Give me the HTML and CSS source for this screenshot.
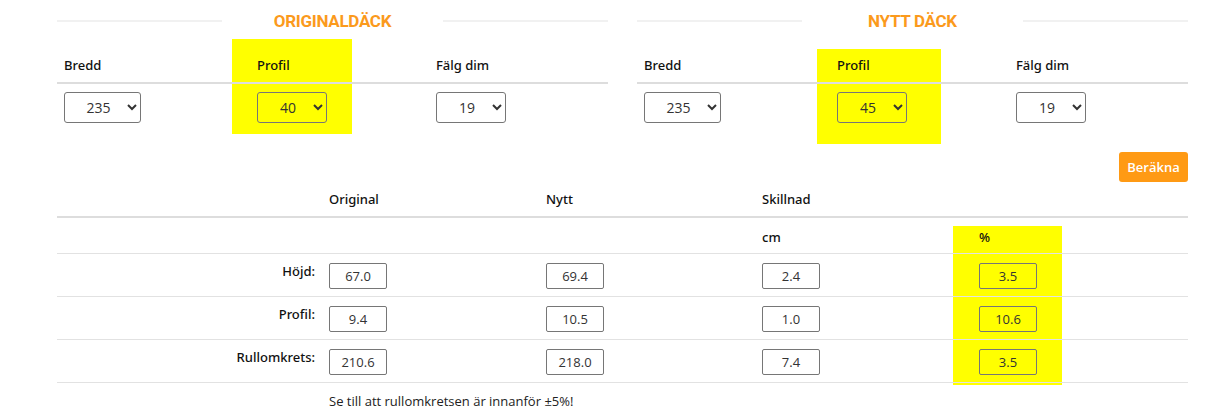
FILE: index.html
```html
<!DOCTYPE html>
<html lang="sv">
<head>
  <meta charset="UTF-8" />
  <meta name="viewport" content="width=device-width, initial-scale=1.0"/>
  <title>Däckkalkylator</title>
  <link rel="stylesheet" href="styles.css">
</head>
<body>

  <div class="page">
    <div class="tyres">
      <section class="tyre">
        <h2 class="tyre-title">ORIGINALDÄCK</h2>
        <div class="tyre-grid">
          <div class="th">Bredd</div>
          <div class="th mark">Profil</div>
          <div class="th">Fälg dim</div>
          <div class="td">
            <select class="wide"><option>205</option><option>215</option><option>225</option><option selected>235</option><option>245</option></select>
          </div>
          <div class="td">
            <select><option>35</option><option selected>40</option><option>45</option><option>50</option></select>
          </div>
          <div class="td">
            <select><option>17</option><option>18</option><option selected>19</option><option>20</option></select>
          </div>
        </div>
      </section>

      <section class="tyre">
        <h2 class="tyre-title">NYTT DÄCK</h2>
        <div class="tyre-grid">
          <div class="th">Bredd</div>
          <div class="th mark mark-new">Profil</div>
          <div class="th">Fälg dim</div>
          <div class="td">
            <select class="wide"><option>205</option><option>215</option><option>225</option><option selected>235</option><option>245</option></select>
          </div>
          <div class="td">
            <select><option>35</option><option>40</option><option selected>45</option><option>50</option></select>
          </div>
          <div class="td">
            <select><option>17</option><option>18</option><option selected>19</option><option>20</option></select>
          </div>
        </div>
      </section>
    </div>

    <div class="actions">
      <button id="calcBtn">Beräkna</button>
    </div>

    <div class="result">
      <div class="row head">
        <div></div>
        <div class="cell">Original</div>
        <div class="cell">Nytt</div>
        <div class="cell">Skillnad</div>
        <div></div>
      </div>
      <div class="row sub">
        <div></div>
        <div></div>
        <div></div>
        <div class="cell">cm</div>
        <div class="cell mark-pct">%</div>
      </div>
      <div class="row">
        <div class="label">Höjd:</div>
        <div class="cell"><input type="text" value="67.0" readonly></div>
        <div class="cell"><input type="text" value="69.4" readonly></div>
        <div class="cell"><input type="text" value="2.4" readonly></div>
        <div class="cell"><input type="text" value="3.5" readonly></div>
      </div>
      <div class="row">
        <div class="label">Profil:</div>
        <div class="cell"><input type="text" value="9.4" readonly></div>
        <div class="cell"><input type="text" value="10.5" readonly></div>
        <div class="cell"><input type="text" value="1.0" readonly></div>
        <div class="cell"><input type="text" value="10.6" readonly></div>
      </div>
      <div class="row">
        <div class="label">Rullomkrets:</div>
        <div class="cell"><input type="text" value="210.6" readonly></div>
        <div class="cell"><input type="text" value="218.0" readonly></div>
        <div class="cell"><input type="text" value="7.4" readonly></div>
        <div class="cell"><input type="text" value="3.5" readonly></div>
      </div>
      <p class="note">Se till att rullomkretsen är innanför ±5%!</p>
    </div>
  </div>

</body>
</html>
```

FILE: styles.css
```css
body {
  margin: 0;
  background: #fff;
  font-family: 'Open Sans', sans-serif;
  font-size: 13px;
  color: #222;
}

.page {
  width: 1131px;
  margin-left: 57px;
}

/* däck-väljare */
.tyres {
  display: flex;
  gap: 29px;
}

.tyre {
  flex: 1;
}

.tyre-title {
  display: grid;
  grid-template-columns: 30% 1fr 30%;
  align-items: center;
  height: 42px;
  margin: 0;
  font-family: Roboto, sans-serif;
  font-size: 17px;
  font-weight: bold;
  letter-spacing: -0.3px;
  text-align: center;
  color: #fb9a1c;
}

.tyre-title::before,
.tyre-title::after {
  content: '';
  height: 2px;
  background: #f1f1f1;
}

.tyre-grid {
  display: grid;
  grid-template-columns: 193px 179px 1fr;
}

.th {
  padding: 14px 7px 8px;
  line-height: 18px;
  font-family: 'Noto Sans', sans-serif;
  font-weight: 500;
  color: #111;
  border-bottom: 2px solid #ddd;
}

.td {
  padding: 8px 7px 9px;
}

select {
  width: 70px;
  height: 31px;
  padding: 0 4px 0 8px;
  border: 1px solid #767676;
  border-radius: 3px;
  background: transparent;
  font-family: 'Open Sans', sans-serif;
  font-size: 14px;
  color: #333;
  text-align-last: center;
}

select.wide {
  width: 77px;
}

/* gul markering */
.mark,
.mark-pct {
  position: relative;
}

.mark::before,
.mark-pct::before {
  content: '';
  position: absolute;
  z-index: -1;
  background: #ffff00;
}

.mark::before {
  left: -18px;
  top: -3px;
  width: 120px;
  height: 95px;
}

.mark-new::before {
  left: -13px;
  top: 7px;
  width: 124px;
}

.mark-pct::before {
  left: -18px;
  top: 8px;
  width: 109px;
  height: 159px;
}

.actions {
  display: flex;
  justify-content: flex-end;
  padding-top: 20px;
}

#calcBtn {
  width: 69px;
  height: 30px;
  padding: 0;
  border: none;
  border-radius: 3px;
  background: #ff9a14;
  color: #fff;
  font-family: 'Open Sans', sans-serif;
  font-size: 13px;
  font-weight: 600;
  cursor: pointer;
}

/* resultat */
.row {
  display: grid;
  grid-template-columns: 264px 217px 216px 217px 1fr;
  height: 42px;
  border-bottom: 1px solid #e2e2e2;
}

.row.head {
  height: 34px;
  border-bottom: 2px solid #ddd;
}

.row.head .cell {
  padding-top: 8px;
}

.row.sub {
  height: 35px;
}

.row.sub .cell {
  padding-top: 10px;
}

.cell {
  padding: 9px 8px 0;
  line-height: 18px;
  font-family: 'Noto Sans', sans-serif;
  font-weight: 500;
  color: #111;
}

.label {
  padding: 8px 6px 0 0;
  line-height: 18px;
  text-align: right;
  font-family: 'Noto Sans', sans-serif;
  font-weight: 500;
  color: #111;
}

input {
  display: block;
  box-sizing: border-box;
  width: 58px;
  height: 26px;
  padding: 0;
  border: 1px solid #767676;
  border-radius: 2px;
  background: transparent;
  font-family: 'Open Sans', sans-serif;
  font-size: 13px;
  font-weight: normal;
  color: #333;
  text-align: center;
}

.note {
  margin: 0;
  padding: 9px 0 0 272px;
  line-height: 18px;
}
```
